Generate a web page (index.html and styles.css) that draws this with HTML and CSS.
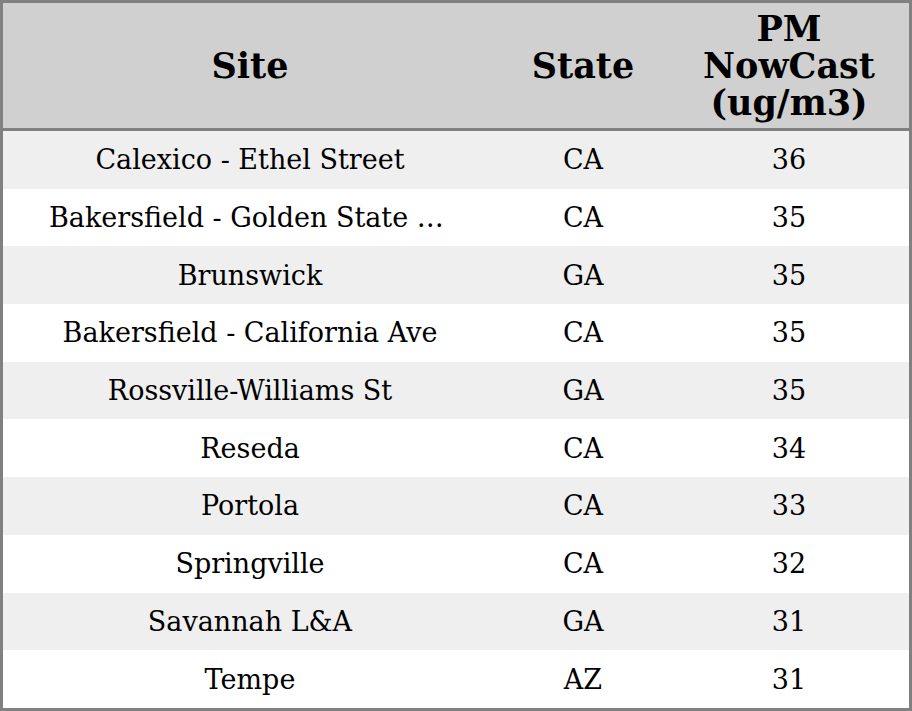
FILE: index.html
```html
<!DOCTYPE html>
<html>
<head>
<meta charset="utf-8">
<link rel="stylesheet" href="styles.css">
</head>
<body>
<div class="frame">
<table class="grid">
<colgroup><col class="c-site"><col class="c-state"><col class="c-pm"></colgroup>
<thead>
<tr><th>Site</th><th>State</th><th>PM<br>NowCast<br>(ug/m3)</th></tr>
</thead>
<tbody>
<tr><td>Calexico - Ethel Street</td><td>CA</td><td>36</td></tr>
<tr><td>Bakersfield - Golden State Highway</td><td>CA</td><td>35</td></tr>
<tr><td>Brunswick</td><td>GA</td><td>35</td></tr>
<tr><td>Bakersfield - California Ave</td><td>CA</td><td>35</td></tr>
<tr><td>Rossville-Williams St</td><td>GA</td><td>35</td></tr>
<tr><td>Reseda</td><td>CA</td><td>34</td></tr>
<tr><td>Portola</td><td>CA</td><td>33</td></tr>
<tr><td>Springville</td><td>CA</td><td>32</td></tr>
<tr><td>Savannah L&amp;A</td><td>GA</td><td>31</td></tr>
<tr><td>Tempe</td><td>AZ</td><td>31</td></tr>
</tbody>
</table>
</div>
</body>
</html>
```
FILE: styles.css
```css
html, body { margin: 0; padding: 0; background: #fff; }
.frame {
  width: 912px;
  height: 711px;
  box-sizing: border-box;
  border: 3px solid #808080;
  overflow: hidden;
}
.grid {
  width: 100%;
  border-collapse: collapse;
  table-layout: fixed;
  font-family: "DejaVu Serif", serif;
  color: #000;
}
.c-site { width: 494px; }
.c-state { width: 172px; }
.c-pm { width: 240px; }
.grid th {
  background: #d0d0d0;
  font-size: 35px;
  font-weight: bold;
  line-height: 37px;
  height: 125px;
  padding: 0;
  text-align: center;
  vertical-align: middle;
  border-bottom: 3px solid #808080;
}
.grid td {
  font-size: 27px;
  height: 57.7px;
  padding: 0;
  text-align: center;
  vertical-align: middle;
  white-space: nowrap;
  overflow: hidden;
  text-overflow: ellipsis;
}
.grid td:first-child { padding: 0 46px; }
.grid tbody tr:nth-child(odd) { background: #efefef; }
```
